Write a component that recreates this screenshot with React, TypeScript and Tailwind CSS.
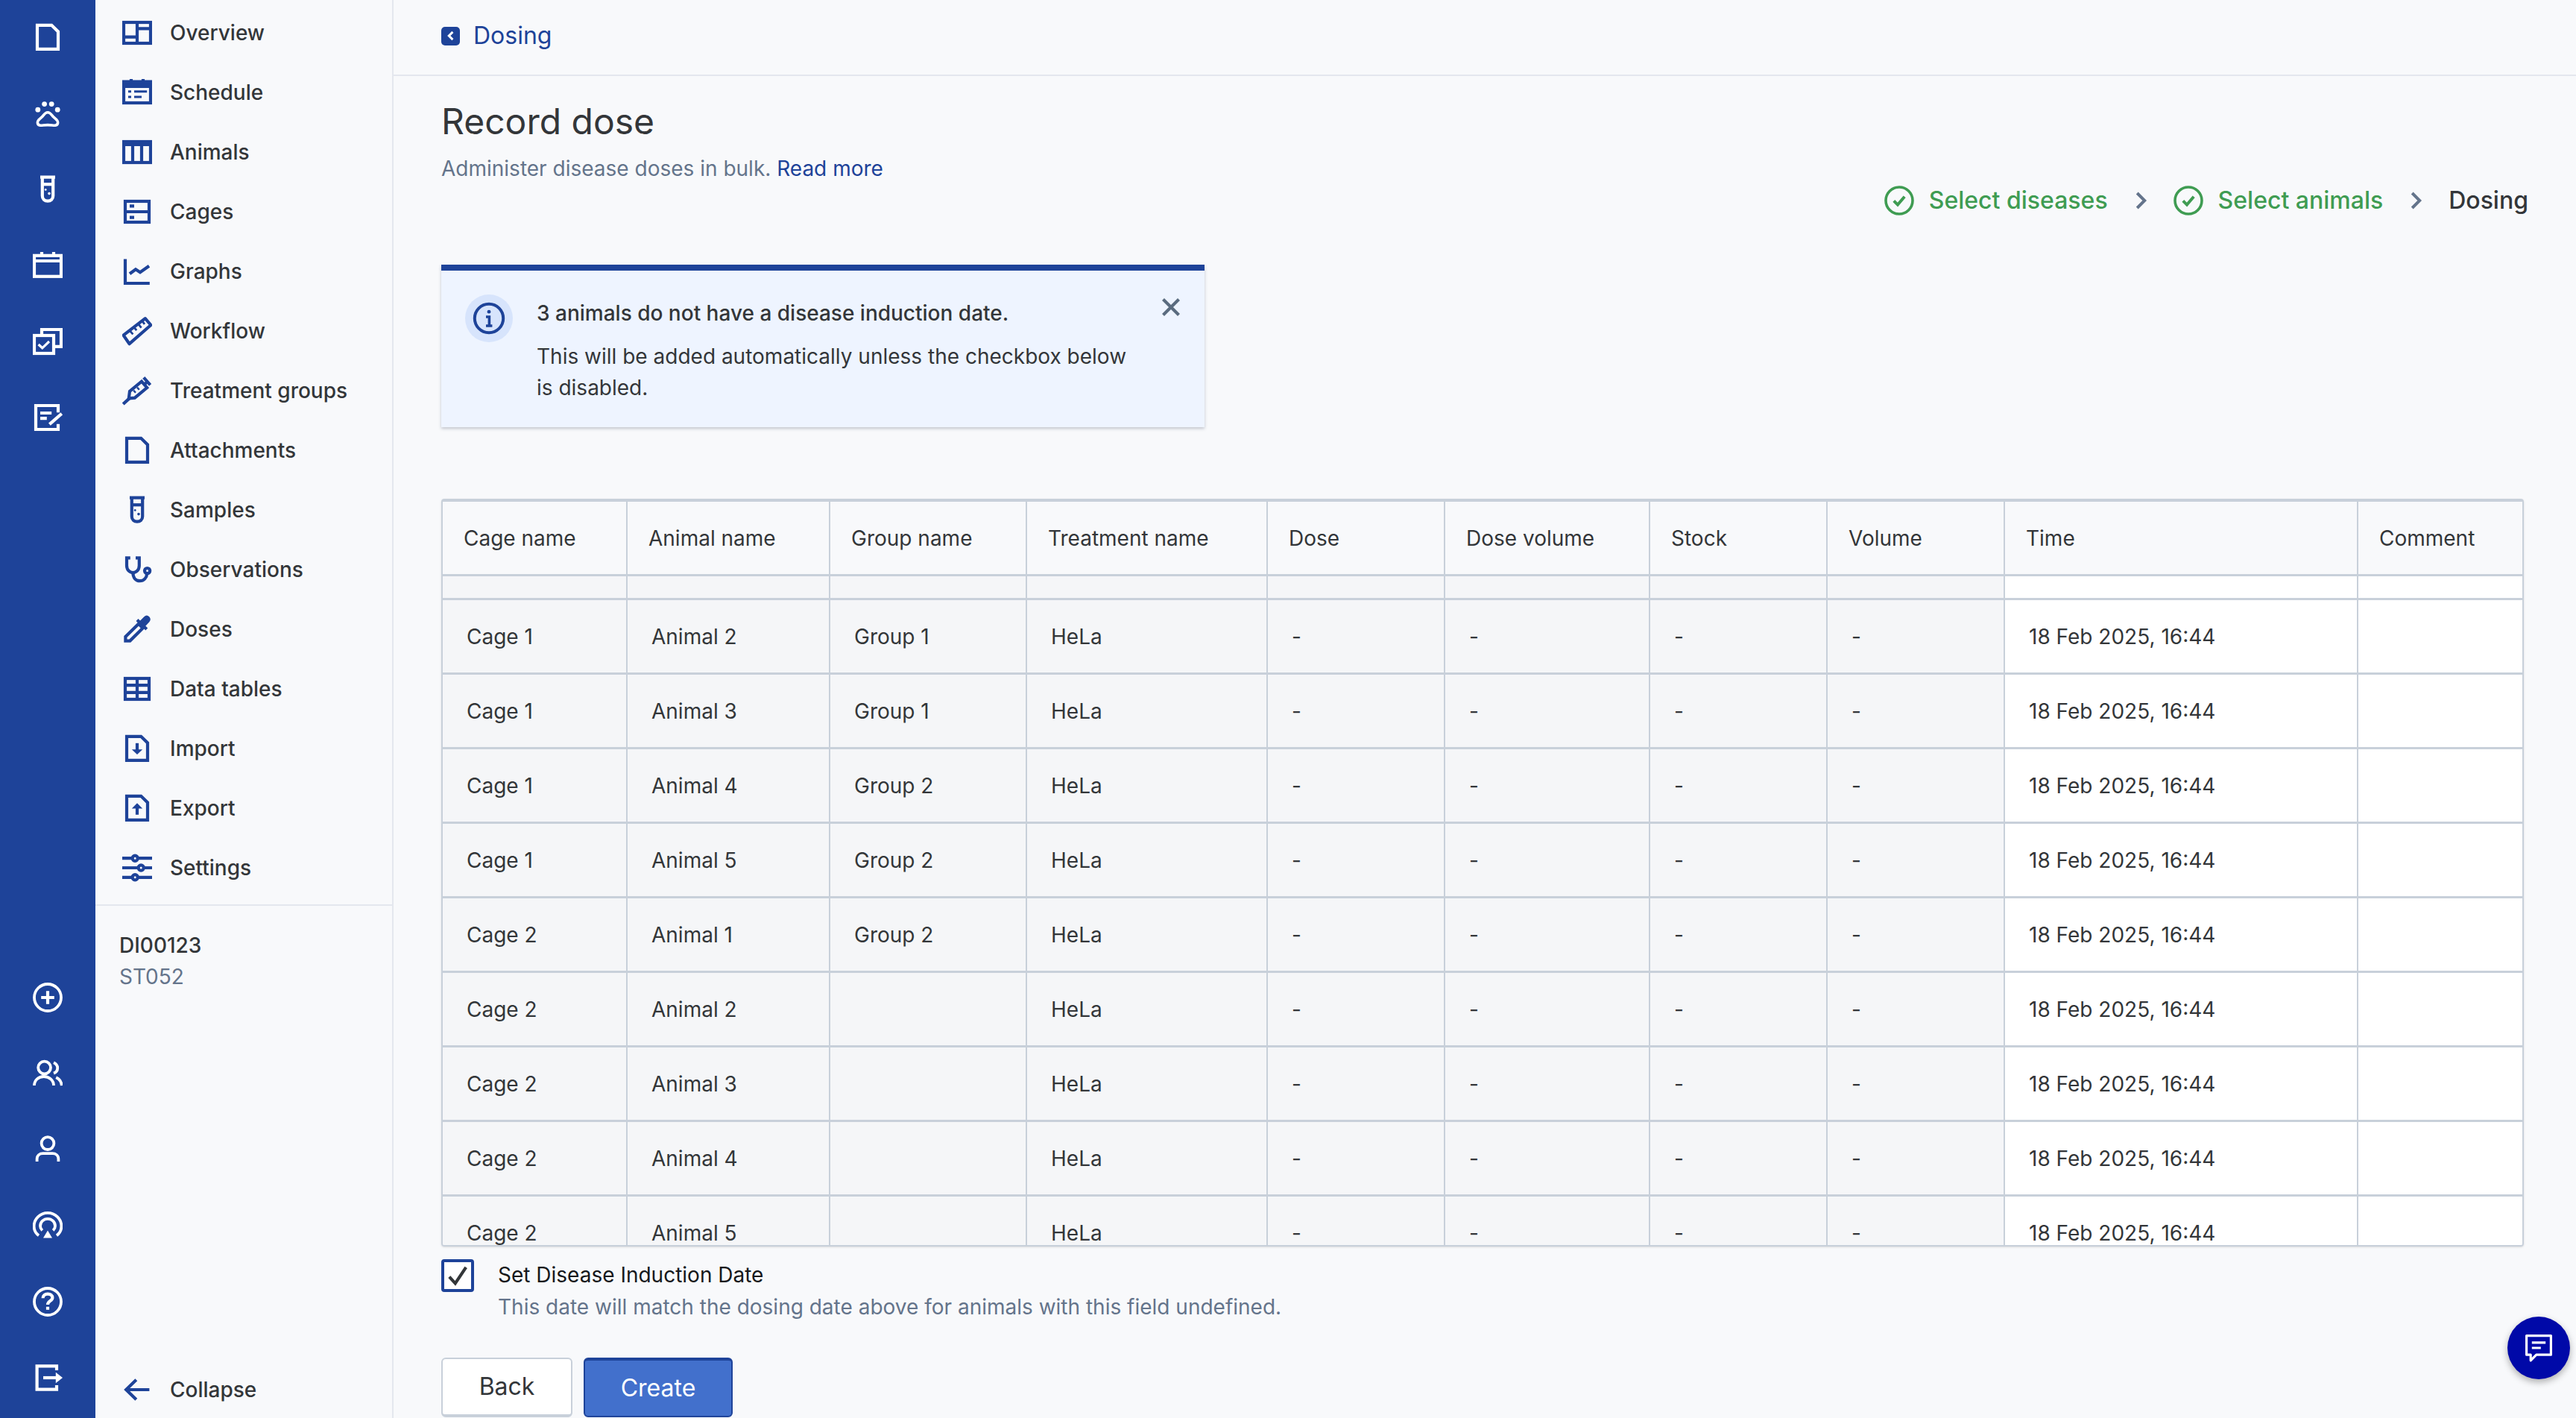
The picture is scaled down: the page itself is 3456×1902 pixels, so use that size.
import React from 'react';

const Icon = ({ children, className = '' }: { children: React.ReactNode; className?: string }) => (
  <svg
    viewBox="0 0 20 20"
    fill="none"
    stroke="currentColor"
    strokeWidth="2.1"
    strokeLinecap="butt"
    strokeLinejoin="miter"
    className={`w-10 h-10 shrink-0 ${className}`}
  >
    {children}
  </svg>
);

const fileShape = 'M3 1.9H12.6L17 6.2V17.9H3Z';

const icons: Record<string, React.ReactNode> = {
  overview: (
    <>
      <rect x="1" y="3" width="18" height="14" />
      <path d="M10 2.8V17.2M0.8 12.8H10M10 7.2H19.2" />
    </>
  ),
  schedule: (
    <>
      <rect x="1" y="3" width="18" height="14" />
      <path d="M0.8 2.8H19.2V6H0.8Z" fill="currentColor" />
      <path d="M6 1V3M14 1V3" />
      <path d="M4 9.4H6M8 9.4H16.6M4 13H6M8 13H13" strokeWidth="1.5" />
    </>
  ),
  animals: (
    <>
      <rect x="1" y="3" width="18" height="14" />
      <path d="M0.8 5H19.2" />
      <path d="M7 5V17M13 5V17" />
    </>
  ),
  cages: (
    <>
      <rect x="2" y="3" width="16" height="14" />
      <path d="M1.8 10H18.2M5 6.2H8M5 13.8H8" />
    </>
  ),
  graphs: (
    <>
      <path d="M2 1.8V18H18.4" />
      <path d="M5 11.6L9 8.6L12 10.6L18 6.4" />
    </>
  ),
  workflow: (
    <>
      <path d="M0.8 12.8L15.4 1.6L19.2 6L4.8 18.6Z" strokeLinejoin="round" />
      <path d="M5.4 10.2L7.2 12.2M8.2 7.8L9.6 9.6M11 5.6L12.8 7.8M13.6 3.6L15 5.4" strokeWidth="1.4" />
    </>
  ),
  treatment: (
    <>
      <path d="M5 10.4L13 3.8L16.6 8L8.4 14.8L4.4 15.2Z" />
      <path d="M14.4 1.2L18.8 6.2M15 5.8L17.4 3.4M4.8 15.2L0.6 19" />
      <path d="M7.6 9.8L9 11.4M10 7.8L11.4 9.4" strokeWidth="1.2" />
    </>
  ),
  attachments: <path d={fileShape} />,
  samples: (
    <>
      <path d="M5 1.8H15" />
      <path d="M6.4 2V14.4C6.4 16.6 8 17.8 10 17.8C12 17.8 13.6 16.6 13.6 14.4V2" />
      <path d="M6.4 6.6H13.6" />
      <circle cx="8.6" cy="10.2" r="0.7" fill="currentColor" stroke="none" />
      <circle cx="11" cy="12.8" r="0.9" fill="currentColor" stroke="none" />
    </>
  ),
  observations: (
    <>
      <path d="M5.4 2.2H3V7.4C3 10.2 5 12 7.2 12C9.4 12 11.4 10.2 11.4 7.4V2.2H9" />
      <path d="M7.2 12C7.2 15.6 9.2 17.6 11.8 17.6C14.6 17.6 16.4 15.4 16.6 12.8" />
      <circle cx="16.8" cy="10.8" r="1.8" />
    </>
  ),
  doses: (
    <>
      <path d="M2.2 15L11 6.4L13.8 9.2L5.2 17.8H2.2Z" />
      <path d="M10 3.8L16.4 10M12.4 5.4L15.4 2.4C16 1.8 16.8 1.8 17.4 2.4C18 3 18 3.8 17.4 4.4L14.6 7.4" fill="currentColor" />
    </>
  ),
  dataTables: (
    <>
      <rect x="2" y="3" width="16" height="14" />
      <path d="M1.8 7.6H18.2M1.8 12.4H18.2M10 2.8V17.2" />
    </>
  ),
  importFile: (
    <>
      <path d={fileShape} />
      <path d="M10 6.4V12" />
      <path d="M6.4 10.6H13.6L10 14Z" fill="currentColor" stroke="none" />
    </>
  ),
  exportFile: (
    <>
      <path d={fileShape} />
      <path d="M10 14.4V9" />
      <path d="M6.4 10.2H13.6L10 6.6Z" fill="currentColor" stroke="none" />
    </>
  ),
  settings: (
    <>
      <path d="M0 3.6H6.6M10.6 3.6H20M0 10H10.6M14.8 10H20M0 16.4H6.6M10.6 16.4H20" />
      <circle cx="8.6" cy="3.6" r="1.8" />
      <circle cx="12.6" cy="10" r="1.8" />
      <circle cx="8.6" cy="16.4" r="1.8" />
    </>
  ),
  collapse: <path d="M18.2 10H3M9.4 3.4L2.6 10L9.4 16.6" />,
  paw: (
    <>
      <path d="M10 9.4C8.2 9.4 7.6 10.8 6.2 12.4C4.8 13.8 3 14.4 3.2 16.4C3.4 18.4 5.4 18.2 7 18C8.6 17.8 11.4 17.8 13 18C14.6 18.2 16.6 18.4 16.8 16.4C17 14.4 15.2 13.8 13.8 12.4C12.4 10.8 11.8 9.4 10 9.4Z" strokeWidth="1.8" />
      <circle cx="7.8" cy="3.8" r="1.7" fill="currentColor" stroke="none" />
      <circle cx="12.6" cy="3.8" r="1.7" fill="currentColor" stroke="none" />
      <circle cx="3.4" cy="7.6" r="1.7" fill="currentColor" stroke="none" />
      <circle cx="16.6" cy="7.6" r="1.7" fill="currentColor" stroke="none" />
    </>
  ),
  calendar: (
    <>
      <rect x="1" y="3.4" width="18" height="14" />
      <path d="M0.8 7H19.2M6 1V4M14 1V4" />
    </>
  ),
  copyCheck: (
    <>
      <path d="M6 6V2H19V13.4H14" />
      <rect x="1" y="6" width="13" height="12" />
      <path d="M3.8 12L6.4 14.4L11 10" strokeWidth="1.6" />
    </>
  ),
  noteEdit: (
    <>
      <path d="M17 6.6V2H2V18H17V14.4" />
      <path d="M5 7H12.6M5 10.6H9.4" />
      <path d="M11.2 14.6L19.4 7.4" />
    </>
  ),
  plusCircle: (
    <>
      <circle cx="10" cy="10" r="9" strokeWidth="1.9" />
      <path d="M10 5.6V14.4M5.6 10H14.4" />
    </>
  ),
  users: (
    <>
      <circle cx="7.8" cy="6" r="4.2" strokeWidth="1.9" />
      <path d="M14 2.6C15.6 3.4 16.6 4.8 16.6 6.2C16.6 7.8 15.6 9.2 14 9.8" strokeWidth="1.9" />
      <path d="M1 18C1 14.6 3.8 12 7.4 12C11 12 14 14.6 14 18" strokeWidth="1.9" />
      <path d="M15.6 12.6C17.8 13.6 19.2 15.6 19.4 18" strokeWidth="1.9" />
    </>
  ),
  user: (
    <>
      <circle cx="10" cy="5.8" r="4.2" strokeWidth="1.9" />
      <path d="M2.8 18V16.4C2.8 14 4.6 12.6 6.8 12.6H13.2C15.4 12.6 17.2 14 17.2 16.4V18" strokeWidth="1.9" />
    </>
  ),
  broadcast: (
    <>
      <path d="M4 16.6C2 15.2 0.8 12.8 0.8 10.4C0.8 5.4 5 1.4 10 1.4C15 1.4 19.2 5.4 19.2 10.4C19.2 12.8 18 15.2 16 16.6" strokeWidth="1.9" />
      <path d="M6.4 13.2C5.4 12.2 5 11.2 5 10.2C5 7.6 7.2 5.4 10 5.4C12.8 5.4 15 7.6 15 10.2C15 11.2 14.6 12.2 13.6 13.2" strokeWidth="1.9" />
      <path d="M10 13.2L13 18.2H7Z" fill="currentColor" stroke="none" />
    </>
  ),
  help: (
    <>
      <circle cx="10" cy="10" r="9" strokeWidth="1.9" />
      <path d="M6.8 7.6C6.8 5.8 8.2 4.8 10 4.8C11.8 4.8 13.2 5.8 13.2 7.4C13.2 9.4 10 9.6 10 12" />
      <path d="M10 13.4V15.4" />
    </>
  ),
  logout: (
    <>
      <path d="M16 5V2.2H2.8V17.8H16V15" />
      <path d="M7 10H16.6" />
      <path d="M15.4 6.4L20 10L15.4 13.6Z" fill="currentColor" stroke="none" />
    </>
  ),
};

const railTop = ['attachments', 'paw', 'samples', 'calendar', 'copyCheck', 'noteEdit'];
const railBottom = ['plusCircle', 'users', 'user', 'broadcast', 'help', 'logout'];

const navItems = [
  { label: 'Overview', icon: 'overview' },
  { label: 'Schedule', icon: 'schedule' },
  { label: 'Animals', icon: 'animals' },
  { label: 'Cages', icon: 'cages' },
  { label: 'Graphs', icon: 'graphs' },
  { label: 'Workflow', icon: 'workflow' },
  { label: 'Treatment groups', icon: 'treatment' },
  { label: 'Attachments', icon: 'attachments' },
  { label: 'Samples', icon: 'samples' },
  { label: 'Observations', icon: 'observations' },
  { label: 'Doses', icon: 'doses' },
  { label: 'Data tables', icon: 'dataTables' },
  { label: 'Import', icon: 'importFile' },
  { label: 'Export', icon: 'exportFile' },
  { label: 'Settings', icon: 'settings' },
];

const columns = ['Cage name', 'Animal name', 'Group name', 'Treatment name', 'Dose', 'Dose volume', 'Stock', 'Volume', 'Time', 'Comment'];
const colWidths = ['w-[248px]', 'w-[272px]', 'w-[264px]', 'w-[323px]', 'w-[238px]', 'w-[275px]', 'w-[238px]', 'w-[238px]', 'w-[474px]', 'w-[220px]'];

const rows = [
  ['Cage 1', 'Animal 2', 'Group 1'],
  ['Cage 1', 'Animal 3', 'Group 1'],
  ['Cage 1', 'Animal 4', 'Group 2'],
  ['Cage 1', 'Animal 5', 'Group 2'],
  ['Cage 2', 'Animal 1', 'Group 2'],
  ['Cage 2', 'Animal 2', ''],
  ['Cage 2', 'Animal 3', ''],
  ['Cage 2', 'Animal 4', ''],
  ['Cage 2', 'Animal 5', ''],
];

const cellLine = 'border-r-2 border-b-[3px] border-[#c8d0da] last:border-r-0';
const greyCell = `${cellLine} pl-[32px] bg-[#f5f6f8]`;

const StepDone = ({ label }: { label: string }) => (
  <div className="flex items-center gap-[20px] text-[#3f9c52]">
    <svg viewBox="0 0 20 20" fill="none" stroke="currentColor" className="w-10 h-10">
      <circle cx="10" cy="10" r="9" strokeWidth="1.8" />
      <path d="M6.4 10.2L9 12.8L13.6 7.4" strokeWidth="2" />
    </svg>
    <span>{label}</span>
  </div>
);

const StepArrow = () => (
  <svg viewBox="0 0 10 20" fill="none" stroke="#64748b" strokeWidth="2" className="w-5 h-10 mx-[34px]">
    <path d="M2.6 5L7.6 10L2.6 15" />
  </svg>
);

export default function App() {
  return (
    <div className="relative flex w-[3456px] h-[1902px] overflow-hidden bg-[#f8f9fb] text-[28px] leading-[42px] text-[#333639] font-['Inter',sans-serif]">
      <aside className="w-[128px] shrink-0 bg-[#1e4399] text-white flex flex-col justify-between items-center pb-[3px]">
        <div className="-mt-px">
          {railTop.map((name) => (
            <div key={name} className="h-[102px] flex items-center justify-center">
              <Icon>{icons[name]}</Icon>
            </div>
          ))}
        </div>
        <div>
          {railBottom.map((name) => (
            <div key={name} className="h-[102px] flex items-center justify-center">
              <Icon>{icons[name]}</Icon>
            </div>
          ))}
        </div>
      </aside>

      <nav className="w-[400px] shrink-0 border-r-2 border-[#e4e7ee] flex flex-col pt-1 font-medium">
        <div className="pb-[9px] border-b-2 border-[#e4e7ee]">
          {navItems.map((item) => (
            <div key={item.label} className="h-20 flex items-center pl-9 gap-6">
              <span className="text-[#1e4399]">
                <Icon>{icons[item.icon]}</Icon>
              </span>
              <span className="whitespace-nowrap">{item.label}</span>
            </div>
          ))}
        </div>
        <div className="pt-8 pl-8">
          <div>DI00123</div>
          <div className="text-[#64748b] font-normal">ST052</div>
        </div>
        <div className="mt-auto h-[76px] flex items-center pl-9 gap-6">
          <span className="text-[#1e4399]">
            <Icon>{icons.collapse}</Icon>
          </span>
          <span>Collapse</span>
        </div>
      </nav>

      <main className="flex-1 min-w-0 flex flex-col">
        <div className="h-[102px] shrink-0 border-b-2 border-[#e4e7ee] flex items-center pb-1 pl-16 gap-[18px] text-[#1e4399]">
          <span className="w-[25px] h-[25px] rounded-[5px] bg-[#1e4399] flex items-center justify-center">
            <svg viewBox="0 0 12 12" fill="none" stroke="white" strokeWidth="2" className="w-[18px] h-[18px]">
              <path d="M7.6 2.6L4.2 6L7.6 9.4" />
            </svg>
          </span>
          <span className="text-[32px]">Dosing</span>
        </div>

        <div className="pl-16 pr-[70px] flex-1 flex flex-col">
          <div className="h-[188px] pt-[31px] flex justify-between shrink-0">
            <div>
              <h1 className="text-[48px] leading-[60px] font-normal">Record dose</h1>
              <p className="mt-3 text-[#64748b]">
                Administer disease doses in bulk. <span className="text-[#1e4399]">Read more</span>
              </p>
            </div>
            <div className="self-end flex items-center text-[32px] font-medium -mr-[6px]">
              <StepDone label="Select diseases" />
              <StepArrow />
              <StepDone label="Select animals" />
              <StepArrow />
              <span>Dosing</span>
            </div>
          </div>

          <div className="relative mt-[65px] w-[1024px] h-[218px] shrink-0 bg-[#eef4ff] border-t-8 border-[#1e4399] shadow-[0_2px_4px_rgba(30,40,70,0.25)] flex pt-8 pl-8 gap-8">
            <div className="w-16 h-16 rounded-full bg-[#d7e4fc] flex items-center justify-center shrink-0 text-[#1e4399]">
              <svg viewBox="0 0 22 22" fill="none" stroke="currentColor" strokeWidth="2" className="w-11 h-11">
                <circle cx="11" cy="11" r="9.6" />
                <path d="M9 10H11.2V16M9 16H13.2" strokeWidth="1.8" />
                <circle cx="11" cy="6.6" r="1.2" fill="currentColor" stroke="none" />
              </svg>
            </div>
            <div className="w-[810px] pt-1">
              <div className="font-medium">3 animals do not have a disease induction date.</div>
              <div className="mt-4">This will be added automatically unless the checkbox below is disabled.</div>
            </div>
            <svg viewBox="0 0 20 20" fill="none" stroke="#5a6b7f" strokeWidth="2.8" className="absolute right-[30px] top-[34px] w-[30px] h-[30px]">
              <path d="M3 3L17 17M17 3L3 17" />
            </svg>
          </div>

          <div className="mt-[96px] w-[2794px] h-[1003px] shrink-0 rounded-[4px] border-2 border-t-4 border-[#c8d0da] overflow-hidden shadow-sm">
            <table className="table-fixed w-[2790px] border-separate border-spacing-0">
              <colgroup>
                {colWidths.map((w, i) => (
                  <col key={i} className={w} />
                ))}
              </colgroup>
              <thead>
                <tr className="h-[100px]">
                  {columns.map((c) => (
                    <th key={c} className={`${cellLine} pl-[28px] text-left font-normal`}>
                      {c}
                    </th>
                  ))}
                </tr>
              </thead>
              <tbody>
                <tr className="h-[32px]">
                  {columns.map((c, i) => (
                    <td key={c} className={`${cellLine} ${i < 8 ? 'bg-[#f5f6f8]' : 'bg-white'}`} />
                  ))}
                </tr>
                {rows.map((r, idx) => (
                  <tr key={idx} className="h-[100px]">
                    <td className={greyCell}>{r[0]}</td>
                    <td className={greyCell}>{r[1]}</td>
                    <td className={greyCell}>{r[2]}</td>
                    <td className={greyCell}>HeLa</td>
                    <td className={greyCell}>-</td>
                    <td className={greyCell}>-</td>
                    <td className={greyCell}>-</td>
                    <td className={greyCell}>-</td>
                    <td className={`${cellLine} pl-[32px] bg-white`}>18 Feb 2025, 16:44</td>
                    <td className={`${cellLine} bg-white`} />
                  </tr>
                ))}
              </tbody>
            </table>
          </div>

          <div className="mt-[17px] flex gap-8 shrink-0">
            <div className="w-11 h-11 rounded-[4px] border-[4px] border-[#1e4399] bg-white flex items-center justify-center">
              <svg viewBox="0 0 20 20" fill="none" stroke="#333639" strokeWidth="2.6" className="w-8 h-8">
                <path d="M3 11L8 16.5L17 3" />
              </svg>
            </div>
            <div>
              <div className="text-[#16181b]">Set Disease Induction Date</div>
              <div className="mt-px text-[#64748b]">This date will match the dosing date above for animals with this field undefined.</div>
            </div>
          </div>

          <div className="mt-[47px] flex gap-[15px] shrink-0">
            <button className="w-[176px] h-20 rounded-[6px] bg-white border-2 border-b-4 border-[#c8d0da] text-[32px]">Back</button>
            <button className="w-[200px] h-20 rounded-[6px] bg-[#4270cc] border-2 border-t-4 border-[#1e4399] text-white text-[32px]">Create</button>
          </div>
        </div>
      </main>

      <div className="absolute right-2 bottom-[52px] w-[84px] h-[84px] rounded-full bg-[#0009a8] shadow-[0_4px_10px_rgba(0,0,0,0.3)] flex items-center justify-center">
        <svg viewBox="0 0 20 20" fill="none" stroke="white" strokeWidth="1.6" className="w-10 h-10">
          <path d="M1.8 1.8H18.2V14.6H8.4L4.6 18.4V14.6H1.8Z" strokeLinejoin="round" />
          <path d="M5.4 6.4H14.6M5.4 10H11.4" />
        </svg>
      </div>
    </div>
  );
}
